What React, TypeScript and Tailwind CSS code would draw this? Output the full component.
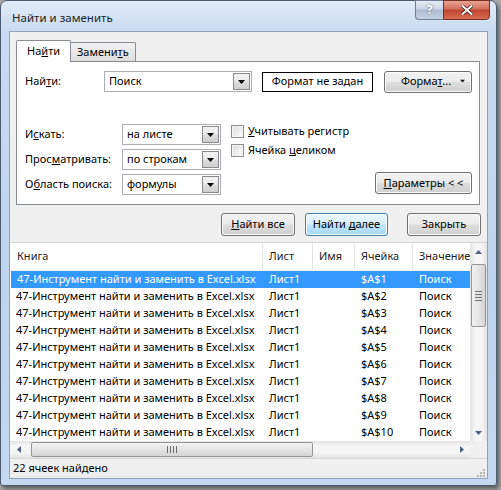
import React from "react";

const FONT = "font-['Segoe_UI','Noto_Sans',sans-serif]";

const btnBase =
  "flex items-center justify-center h-[22px] rounded-[3px] border text-[11px] text-black shadow-[inset_0_0_0_1px_#fbfbfb]";
const btnGray =
  "border-[#707070] bg-[linear-gradient(to_bottom,#f2f2f2_0%,#ebebeb_48%,#dddddd_52%,#cfcfcf_100%)]";
const btnFocus =
  "border-[#3c7fb1] bg-[linear-gradient(to_bottom,#eaf6fd_0%,#d9f0fc_48%,#bee6fd_52%,#a7d9f5_100%)] shadow-[inset_0_0_0_1px_#ffffff]";

function Arrow({ className = "" }: { className?: string }) {
  return (
    <svg width="7" height="4" viewBox="0 0 7 4" className={className}>
      <path d="M0 0h7L3.5 4z" fill="#000" />
    </svg>
  );
}

function Combo({ value, w }: { value: string; w: string }) {
  return (
    <div className={`${w} h-[21px] flex items-stretch border border-[#abadb3] bg-white`}>
      <div className="flex-1 flex items-center pl-[4px] text-[11px]">{value}</div>
      <div className="w-[17px] m-[1px] flex items-center justify-center border border-[#8a8a8a] bg-[linear-gradient(to_bottom,#f2f2f2,#ebebeb_48%,#dddddd_52%,#cfcfcf)]">
        <Arrow />
      </div>
    </div>
  );
}

function Check({ label }: { label: React.ReactNode }) {
  return (
    <div className="flex items-center h-[19px]">
      <div className="w-[13px] h-[13px] border border-[#8e8f8f] bg-[linear-gradient(135deg,#dcdcdc,#fbfbfb)] shadow-[inset_0_0_0_1px_#f4f4f4]" />
      <span className="ml-[4px] text-[11px]">{label}</span>
    </div>
  );
}

const rows = Array.from({ length: 10 }, (_, i) => `$A$${i + 1}`);

export default function App() {
  return (
    <div className={`${FONT} w-[501px] h-[490px] bg-[#a9a9a9] overflow-hidden text-black`}>
      {/* window */}
      <div className="w-[497px] h-[486px] rounded-t-[7px] rounded-b-[3px] border border-[#4b5b70] bg-[linear-gradient(to_bottom,#e1ecf8,#c9dbf0_30px,#bed3ec_60%,#c4d8ef)] shadow-[2px_3px_4px_rgba(0,0,0,0.45)] flex flex-col">
        {/* title bar */}
        <div className="h-[30px] flex items-start justify-between pl-[11px] pr-[6px]">
          <span className="mt-[8px] text-[11.5px] text-[#1e1e1e]">Найти и заменить</span>
          <div className="flex -mt-px">
            <div className="w-[28px] h-[20px] rounded-bl-[4px] border border-[#6d7e97] border-r-0 bg-[linear-gradient(to_bottom,#e4ebf4,#cbd6e5_45%,#aebdd2_50%,#c4d1e2)] flex items-center justify-center">
              <span className="text-[12px] font-bold text-white [text-shadow:0_0_2px_#3a4a66]">?</span>
            </div>
            <div className="w-[47px] h-[20px] rounded-br-[4px] border border-[#7a2b22] bg-[linear-gradient(to_bottom,#e8a493,#d2705c_45%,#c0442f_50%,#d66d52)] flex items-center justify-center">
              <svg width="12" height="10" viewBox="0 0 12 10">
                <path d="M1.5 1l9 8M10.5 1l-9 8" stroke="#3b1a14" strokeWidth="3.4" strokeLinecap="square" />
                <path d="M1.5 1l9 8M10.5 1l-9 8" stroke="#ffffff" strokeWidth="2" strokeLinecap="square" />
              </svg>
            </div>
          </div>
        </div>

        {/* client */}
        <div className="mx-[8px] w-[479px] h-[448px] border border-[#8ea2bc] bg-[#f0f0f0] flex flex-col">
          {/* tabs */}
          <div className="pt-[7px] pl-[6px] pr-[7px]">
            <div className="flex items-end h-[22px]">
              <div className="relative z-10 w-[55px] h-[22px] -mb-px border border-[#898c95] border-b-0 bg-white rounded-t-[2px] flex items-center pl-[10px] text-[11px]">
                <span>На<u>й</u>ти</span>
              </div>
              <div className="w-[65px] h-[19px] border border-[#898c95] border-l-0 border-b-0 bg-[linear-gradient(to_bottom,#f3f3f3,#e8e8e8_50%,#dddddd)] rounded-tr-[2px] flex items-center pl-[6px] text-[11px]">
                <span>Замени<u>т</u>ь</span>
              </div>
            </div>
            {/* panel */}
            <div className="h-[144px] border border-[#898c95] bg-white pl-[8px] pr-[7px] pt-[9px]">
              <div className="flex items-center h-[21px]">
                <span className="w-[79px] text-[11px]">
                  Най<u>т</u>и:
                </span>
                <Combo value="Поиск" w="w-[148px]" />
                <div className="ml-[10px] w-[111px] h-[20px] border border-black flex items-center justify-center text-[11px]">
                  Формат не задан
                </div>
                <div className={`${btnBase} ${btnGray} ml-[11px] w-[88px] h-[19px] relative`}>
                  <span className="mr-[4px]">
                    Форма<u>т</u>...
                  </span>
                  <Arrow className="absolute right-[5px] top-[7px] scale-75" />
                </div>
              </div>

              <div className="flex mt-[32px]">
                <div className="flex flex-col gap-[4px]">
                  {[
                    [<>И<u>с</u>кать:</>, "на листе"],
                    [<>Прос<u>м</u>атривать:</>, "по строкам"],
                    [<>О<u>б</u>ласть поиска:</>, "формулы"],
                  ].map(([label, val], i) => (
                    <div key={i} className="flex items-center h-[21px]">
                      <span className="w-[97px] text-[11px]">{label}</span>
                      <Combo value={val as string} w="w-[99px]" />
                    </div>
                  ))}
                </div>
                <div className="ml-[10px] -mt-[2px] flex-1 flex flex-col">
                  <Check label={<><u>У</u>читывать регистр</>} />
                  <Check label={<>Ячейка <u>ц</u>еликом</>} />
                  <div className="flex-1" />
                  <div className="flex justify-end">
                    <div className={`${btnBase} ${btnGray} w-[97px] h-[21px] mb-[1px]`}>
                      <span>
                        <u>П</u>араметры &lt; &lt;
                      </span>
                    </div>
                  </div>
                </div>
              </div>
            </div>
          </div>

          {/* buttons */}
          <div className="flex justify-end pr-[6px] mt-[8px] h-[23px]">
            <div className={`${btnBase} ${btnGray} w-[74px] h-[23px]`}>
              <span>
                <u>Н</u>айти все
              </span>
            </div>
            <div className={`${btnBase} ${btnFocus} ml-[10px] w-[83px] h-[23px]`}>
              <span>
                Найти <u>д</u>алее
              </span>
            </div>
            <div className={`${btnBase} ${btnGray} ml-[19px] w-[74px] h-[23px]`}>Закрыть</div>
          </div>

          {/* results list */}
          <div className="mt-[6px] border-t border-[#d5d5d5] flex flex-col">
            <div className="flex">
              <div className="w-[460px] bg-white">
                {/* header */}
                <div className="flex h-[28px] items-center text-[11px] text-[#1e1e1e] border-b border-[#f0f0f0]">
                  <div className="w-[253px] pl-[7px] h-full flex items-center border-r border-[#e5e5e5]">Книга</div>
                  <div className="w-[50px] pl-[6px] h-full flex items-center border-r border-[#e5e5e5]">Лист</div>
                  <div className="w-[42px] pl-[6px] h-full flex items-center border-r border-[#e5e5e5]">Имя</div>
                  <div className="w-[58px] pl-[6px] h-full flex items-center border-r border-[#e5e5e5]">Ячейка</div>
                  <div className="flex-1 min-w-0 pl-[6px] h-full flex items-center overflow-hidden whitespace-nowrap">Значение</div>
                </div>
                {rows.map((cell, i) => (
                  <div
                    key={cell}
                    className={`flex h-[17px] items-center text-[11px] whitespace-nowrap ${
                      i === 0 ? "bg-[#3399ff] text-white ml-px" : ""
                    }`}
                  >
                    <div className={`${i === 0 ? "w-[252px]" : "w-[253px]"} pl-[6px]`}>47-Инструмент найти и заменить в Excel.xlsx</div>
                    <div className="w-[50px] pl-[6px]">Лист1</div>
                    <div className="w-[42px]" />
                    <div className="w-[58px] pl-[6px]">{cell}</div>
                    <div className="flex-1 pl-[6px]">Поиск</div>
                  </div>
                ))}
              </div>
              {/* vertical scrollbar */}
              <div className="w-[17px] bg-[linear-gradient(to_right,#e3e3e3,#f5f5f5_30%,#f5f5f5_70%,#e3e3e3)] flex flex-col items-center">
                <div className="h-[17px] flex items-center justify-center">
                  <svg width="7" height="4" viewBox="0 0 7 4"><path d="M0 4h7L3.5 0z" fill="#4d6185" /></svg>
                </div>
                <div className="mt-[4px] w-[15px] h-[63px] rounded-[2px] border border-[#979797] bg-[linear-gradient(to_right,#f1f1f1,#e5e5e5_50%,#d5d5d5)] flex flex-col items-center justify-center gap-[2px]">
                  <div className="w-[7px] h-px bg-[#6e6e6e]" />
                  <div className="w-[7px] h-px bg-[#6e6e6e]" />
                  <div className="w-[7px] h-px bg-[#6e6e6e]" />
                  <div className="w-[7px] h-px bg-[#6e6e6e]" />
                </div>
                <div className="flex-1" />
                <div className="h-[17px] flex items-center justify-center">
                  <svg width="7" height="4" viewBox="0 0 7 4"><path d="M0 0h7L3.5 4z" fill="#4d6185" /></svg>
                </div>
              </div>
            </div>
            {/* horizontal scrollbar */}
            <div className="flex h-[17px]">
              <div className="w-[460px] flex items-center bg-[linear-gradient(to_bottom,#e3e3e3,#f5f5f5_30%,#f5f5f5_70%,#e3e3e3)]">
                <div className="w-[17px] flex items-center justify-center">
                  <svg width="4" height="7" viewBox="0 0 4 7"><path d="M4 0v7L0 3.5z" fill="#4d6185" /></svg>
                </div>
                <div className="ml-[4px] w-[282px] h-[15px] rounded-[2px] border border-[#979797] bg-[linear-gradient(to_bottom,#f1f1f1,#e5e5e5_50%,#d5d5d5)] flex items-center justify-center gap-[2px]">
                  <div className="w-px h-[7px] bg-[#6e6e6e]" />
                  <div className="w-px h-[7px] bg-[#6e6e6e]" />
                  <div className="w-px h-[7px] bg-[#6e6e6e]" />
                  <div className="w-px h-[7px] bg-[#6e6e6e]" />
                </div>
                <div className="flex-1" />
                <div className="w-[17px] flex items-center justify-center">
                  <svg width="4" height="7" viewBox="0 0 4 7"><path d="M0 0v7L4 3.5z" fill="#4d6185" /></svg>
                </div>
              </div>
              <div className="w-[17px] bg-[#f0f0f0]" />
            </div>
            {/* status bar */}
            <div className="h-[20px] border-t border-[#d7d7d7] bg-[linear-gradient(to_bottom,#f1f1f1,#ececec)] flex items-center justify-between pl-[3px] pr-[2px]">
              <span className="text-[11px]">22 ячеек найдено</span>
              <svg width="10" height="10" viewBox="0 0 10 10" className="self-end mb-[1px]">
                <g fill="#b8b8b8">
                  <rect x="8" y="2" width="2" height="2" />
                  <rect x="5" y="5" width="2" height="2" />
                  <rect x="8" y="5" width="2" height="2" />
                  <rect x="2" y="8" width="2" height="2" />
                  <rect x="5" y="8" width="2" height="2" />
                  <rect x="8" y="8" width="2" height="2" />
                </g>
              </svg>
            </div>
          </div>
        </div>
      </div>
    </div>
  );
}
